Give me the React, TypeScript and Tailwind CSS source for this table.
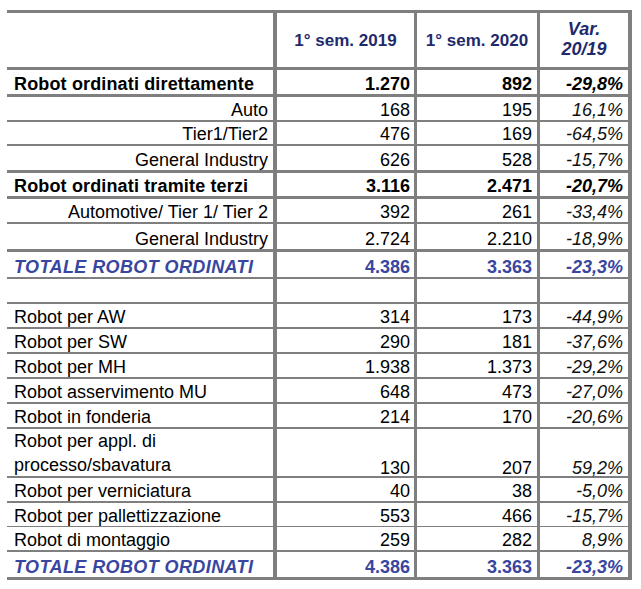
import type { ReactNode } from "react";

type Kind = "section" | "sub" | "total" | "plain" | "empty";

interface Row {
  label: ReactNode;
  a: string;
  b: string;
  c: string;
  kind: Kind;
  rowClass: string; // height (incl. bottom line) + bottom line width
}

const rows: Row[] = [
  { label: "Robot ordinati direttamente", a: "1.270", b: "892", c: "-29,8%", kind: "section", rowClass: "h-[27px] border-b-[3px]" },
  { label: "Auto", a: "168", b: "195", c: "16,1%", kind: "sub", rowClass: "h-[25px] border-b-[2px]" },
  { label: "Tier1/Tier2", a: "476", b: "169", c: "-64,5%", kind: "sub", rowClass: "h-[24px] border-b-[2px]" },
  { label: "General Industry", a: "626", b: "528", c: "-15,7%", kind: "sub", rowClass: "h-[27px] border-b-[3px]" },
  { label: "Robot ordinati tramite terzi", a: "3.116", b: "2.471", c: "-20,7%", kind: "section", rowClass: "h-[26px] border-b-[3px]" },
  { label: "Automotive/ Tier 1/ Tier 2", a: "392", b: "261", c: "-33,4%", kind: "sub", rowClass: "h-[25px] border-b-[2px]" },
  { label: "General Industry", a: "2.724", b: "2.210", c: "-18,9%", kind: "sub", rowClass: "h-[28px] border-b-[3px]" },
  { label: "TOTALE ROBOT ORDINATI", a: "4.386", b: "3.363", c: "-23,3%", kind: "total", rowClass: "h-[27px] border-b-[2px]" },
  { label: "", a: "", b: "", c: "", kind: "empty", rowClass: "h-[25px] border-b-[2px]" },
  { label: "Robot per AW", a: "314", b: "173", c: "-44,9%", kind: "plain", rowClass: "h-[25px] border-b-[2px]" },
  { label: "Robot per SW", a: "290", b: "181", c: "-37,6%", kind: "plain", rowClass: "h-[25px] border-b-[2px]" },
  { label: "Robot per MH", a: "1.938", b: "1.373", c: "-29,2%", kind: "plain", rowClass: "h-[25px] border-b-[2px]" },
  { label: "Robot asservimento MU", a: "648", b: "473", c: "-27,0%", kind: "plain", rowClass: "h-[25px] border-b-[2px]" },
  { label: "Robot in fonderia", a: "214", b: "170", c: "-20,6%", kind: "plain", rowClass: "h-[25px] border-b-[2px]" },
  {
    label: (
      <>
        Robot per appl. di
        <br />
        processo/sbavatura
      </>
    ),
    a: "130",
    b: "207",
    c: "59,2%",
    kind: "plain",
    rowClass: "h-[49px] border-b-[2px]",
  },
  { label: "Robot per verniciatura", a: "40", b: "38", c: "-5,0%", kind: "plain", rowClass: "h-[25px] border-b-[2px]" },
  { label: "Robot per pallettizzazione", a: "553", b: "466", c: "-15,7%", kind: "plain", rowClass: "h-[24px] border-b-[1px]" },
  { label: "Robot di montaggio", a: "259", b: "282", c: "8,9%", kind: "plain", rowClass: "h-[25px] border-b-[2px]" },
  { label: "TOTALE ROBOT ORDINATI", a: "4.386", b: "3.363", c: "-23,3%", kind: "total", rowClass: "h-[28px] border-b-[3px]" },
];

const cell = "flex items-end pb-0";

function TableRow({ row }: { row: Row }) {
  const { kind } = row;

  const labelCls =
    kind === "section"
      ? "justify-start pl-[7px] font-bold text-black tracking-[0.15px]"
      : kind === "sub"
        ? "justify-end pr-[5px] text-black"
        : kind === "total"
          ? "justify-start pl-[7px] font-bold italic text-[#3846a0] tracking-[0.4px]"
          : "justify-start pl-[7px] text-black";

  const numCls =
    kind === "section" ? "font-bold text-black" : kind === "total" ? "font-bold text-[#3846a0]" : "text-black";

  const varCls =
    kind === "section"
      ? "font-bold italic text-black"
      : kind === "total"
        ? "font-bold italic text-[#3846a0]"
        : "italic text-[#111]";

  return (
    <div className={`grid grid-cols-[270px_140px_123px_88px] border-[#7f7f7f] ${row.rowClass}`}>
      <div
        className={`${cell} ${labelCls} border-r-[4px] border-[#7f7f7f] ${
          kind === "plain" && typeof row.label !== "string" ? "leading-[24px] pb-[1px]" : "leading-[20px]"
        }`}
      >
        <span>{row.label}</span>
      </div>
      <div className={`${cell} justify-end pr-[4px] leading-[20px] border-r-[3px] border-[#7f7f7f] ${numCls}`}>
        {row.a}
      </div>
      <div className={`${cell} justify-end pr-[5px] leading-[20px] border-r-[3px] border-[#7f7f7f] ${numCls}`}>
        {row.b}
      </div>
      <div className={`${cell} justify-end pr-[5px] leading-[20px] ${varCls}`}>{row.c}</div>
    </div>
  );
}

export default function App() {
  return (
    <div className="w-[641px] h-[589px] bg-white pt-[10px] pl-[7px] font-['Liberation_Sans',Arial,sans-serif] text-[18px]">
      <div className="w-[625px] border-t-[3px] border-r-[4px] border-[#7f7f7f]">
        {/* header */}
        <div className="grid grid-cols-[270px_140px_123px_88px] h-[57px] border-b-[3px] border-[#7f7f7f] text-[17px] font-bold text-[#1f2a6b]">
          <div className="border-r-[4px] border-[#7f7f7f]" />
          <div className="flex items-center justify-center border-r-[3px] border-[#7f7f7f] pt-[2px]">1° sem. 2019</div>
          <div className="flex items-center justify-center border-r-[3px] border-[#7f7f7f] pt-[2px]">1° sem. 2020</div>
          <div className="flex flex-col items-center justify-center italic text-[18px] leading-[20px] pb-[2px]">
            <span>Var.</span>
            <span>20/19</span>
          </div>
        </div>
        {rows.map((r, i) => (
          <TableRow key={i} row={r} />
        ))}
      </div>
    </div>
  );
}
